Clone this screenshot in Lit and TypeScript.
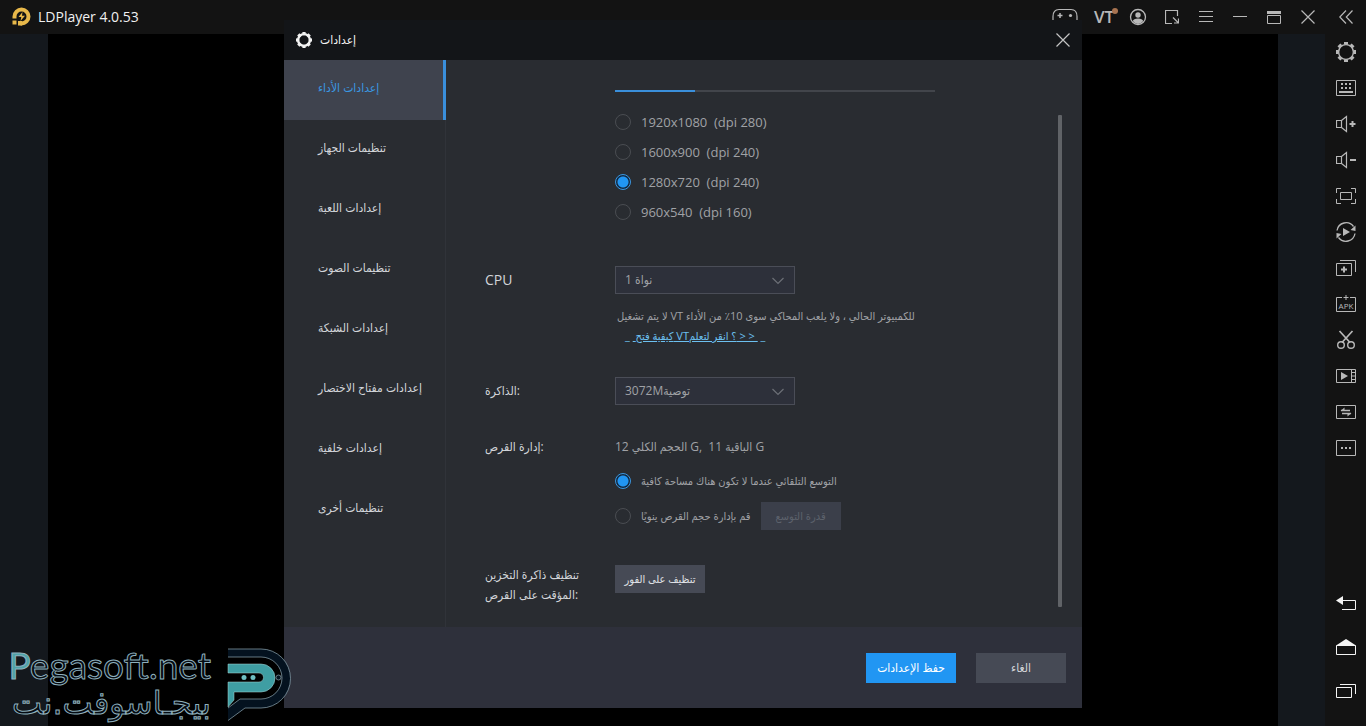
import { LitElement, html, css, svg } from "lit";
import { customElement, state } from "lit/decorators.js";
import { classMap } from "lit/directives/class-map.js";

const icon = (w: number, h: number, body: unknown) =>
  html`<svg width=${w} height=${h} viewBox="0 0 ${w} ${h}" aria-hidden="true">${body}</svg>`;

const gear = (ring: number, tooth: number) => svg`
  <circle cx="10" cy="10" r="7.4" fill="none" stroke="currentColor" stroke-width=${ring}/>
  ${[0, 45, 90, 135, 180, 225, 270, 315].map(
    (a) => svg`<rect x="8" y="0" width="4" height=${tooth} fill="currentColor" transform="rotate(${a} 10 10)"/>`
  )}`;

const speaker = svg`<path d="M.5 6.500h5v7h-5zM5.500 6.500l5-4v15l-5-4" fill="none" stroke="currentColor" stroke-width="1.2"/>`;

const titleIcons = [
  { name: "Gamepad", wide: true, g: icon(26, 20, svg`<path d="M1 19V9.500Q1 2.500 7 2.500h12q6 0 6 7V19" fill="none" stroke="currentColor" stroke-width="1.2"/><path d="M8 6v5M5.500 8.500h5" stroke="currentColor" stroke-width="1.5"/><circle cx="18.500" cy="8.500" r="1.600" fill="currentColor"/>`) },
  { name: "VT", wide: false, g: icon(28, 26, svg`<text x="4" y="19" font-size="17" font-weight="600" fill="currentColor">VT</text><circle cx="25" cy="7" r="3" fill="#a87350"/>`) },
  { name: "Account", wide: false, g: icon(18, 20, svg`<circle cx="9" cy="10" r="7.5" fill="none" stroke="currentColor" stroke-width="1.3"/><circle cx="9" cy="8" r="2.7" fill="currentColor"/><path d="M3.800 14Q4.500 11.500 9 11.500t5.200 2.500Q12 17 9 17t-5.200-3z" fill="currentColor"/>`) },
  { name: "Resize", wide: false, g: icon(14, 20, svg`<path d="M7 16.500H.5v-13h12V9M8 10.500l5 5M13.500 11.500v4.500H9" fill="none" stroke="currentColor" stroke-width="1.2"/>`) },
  { name: "Menu", wide: false, g: icon(14, 20, svg`<path d="M0 4.500h14M0 9.500h14M0 14.500h14" stroke="currentColor"/>`) },
  { name: "Minimize", wide: false, g: icon(14, 20, svg`<path d="M0 9.500h14" stroke="currentColor"/>`) },
  { name: "Maximize", wide: false, g: icon(14, 20, svg`<path d="M0 5.500h14" stroke="currentColor" stroke-width="3"/><path d="M.5 8.500h13v8H.5z" fill="none" stroke="currentColor"/>`) },
  { name: "Close", wide: false, g: icon(14, 20, svg`<path d="M.5 3.500l13 13M13.500 3.500l-13 13" stroke="currentColor" stroke-width="1.2"/>`) },
];

const collapse = icon(14, 20, svg`<path d="M7 3.500L.8 10 7 16.500M13.500 3.500L7.300 10l6.200 6.500" fill="none" stroke="currentColor" stroke-width="1.2"/>`);

const toolIcons = [
  { name: "Settings", g: icon(20, 20, gear(1.4, 2.6)) },
  { name: "Keyboard", g: icon(20, 20, svg`<path d="M.5 2.500h19v15H.5z" fill="none" stroke="currentColor"/><path d="M5 5h2v2H5zM9 5h2v2H9zM13 5h2v2h-2zM5 9h2v2H5zM9 9h2v2H9zM13 9h2v2h-2zM3 13h14v2H3z" fill="currentColor"/>`) },
  { name: "Volume up", g: icon(20, 20, svg`${speaker}<path d="M13.500 10h6M16.500 7v6" stroke="currentColor" stroke-width="2"/>`) },
  { name: "Volume down", g: icon(20, 20, svg`${speaker}<path d="M14 10h6" stroke="currentColor" stroke-width="2"/>`) },
  { name: "Full screen", g: icon(20, 20, svg`<path d="M.5 7V2.500H5M15 2.500h4.500V7M.5 13v4.500H5M15 17.500h4.500V13M4.500 6.500h11v7h-11z" fill="none" stroke="currentColor"/>`) },
  { name: "Sync", g: icon(20, 20, svg`<path d="M1 8.500A9.200 9.200 0 0 1 17.500 4.500M19 11.500A9.200 9.200 0 0 1 2.500 15.500" fill="none" stroke="currentColor" stroke-width="1.3"/><path d="M7 6l7 4-7 4zM19.500 3.500v5.500L14.500 8zM.5 16.500V11l5 1z" fill="currentColor"/>`) },
  { name: "Multi instance", g: icon(20, 20, svg`<path d="M.5 5.500h15v12H.5zM4 2.500h15.500V14" fill="none" stroke="currentColor"/><path d="M5 11.500h6M8 8.500v6" stroke="currentColor" stroke-width="2"/>`) },
  { name: "Install APK", g: icon(20, 20, svg`<path d="M6 3.500H.5v14h19v-14H14M10 1v5M7.500 3.500h5" fill="none" stroke="currentColor"/><text x="10" y="15" text-anchor="middle" font-size="8" fill="currentColor">APK</text>`) },
  { name: "Screenshot", g: icon(20, 20, svg`<path d="M3.500 1l10.500 11.500M16.500 1L6 12.500" stroke="currentColor" stroke-width="1.7"/><circle cx="5" cy="15" r="3.3" fill="none" stroke="currentColor" stroke-width="1.4"/><circle cx="15" cy="15" r="3.3" fill="none" stroke="currentColor" stroke-width="1.4"/>`) },
  { name: "Record", g: icon(20, 20, svg`<path d="M.5 3.500h19v13H.5zM15.500 3.500v13M15.500 6.500h4M15.500 10h4M15.500 13.500h4" fill="none" stroke="currentColor"/><path d="M5 6l7 4-7 4z" fill="currentColor"/>`) },
  { name: "Shared folder", g: icon(20, 20, svg`<path d="M.5 3.500h19v13H.5z" fill="none" stroke="currentColor"/><path d="M5 8.500h9M6 11.500h9" stroke="currentColor" stroke-width="1.5"/><path d="M8.500 5.500V9H4.500zM11.500 14.500V11h4z" fill="currentColor"/>`) },
  { name: "More", g: icon(20, 20, svg`<path d="M.5 2.500h19v15H.5z" fill="none" stroke="currentColor"/><path d="M5 9h2v2H5zM9 9h2v2H9zM13 9h2v2h-2z" fill="currentColor"/>`) },
];

const navIcons = [
  { name: "Back", g: icon(20, 20, svg`<path d="M6 7.500h13.500v9H6" fill="none" stroke="currentColor"/><path d="M0 7.500L7 3v9z" fill="currentColor"/>`) },
  { name: "Home", g: icon(20, 20, svg`<path d="M.5 8.500h19v9H.5z" fill="none" stroke="currentColor"/><path d="M0 8.500L10 2l10 6.500z" fill="currentColor"/>`) },
  { name: "Recent", g: icon(20, 20, svg`<path d="M.5 6.500h15v10H.5zM4 3.500h15.500V13" fill="none" stroke="currentColor"/>`) },
];

const tabs = [
  "إعدادات الأداء",
  "تنظيمات الجهاز",
  "إعدادات اللعبة",
  "تنظيمات الصوت",
  "إعدادات الشبكة",
  "إعدادات مفتاح الاختصار",
  "إعدادات خلفية",
  "تنظيمات أخرى",
];

const resolutions = [
  ["1920x1080", "(dpi 280)"],
  ["1600x900", "(dpi 240)"],
  ["1280x720", "(dpi 240)"],
  ["960x540", "(dpi 160)"],
];

@customElement("settings-dialog")
export class SettingsDialog extends LitElement {
  @state() private tab = 0;
  @state() private resolution = 2;
  @state() private disk = 0;

  static styles = css`
    :host {
      display: flex;
      flex-direction: column;
      width: min(798px, 100%);
      background: #292c31;
      color: #d2d5d9;
      font-family: "Open Sans", "DejaVu Sans Condensed", sans-serif;
      font-size: 12px;
      line-height: 20px;
    }
    * { box-sizing: border-box; }
    button, select { font: inherit; color: inherit; border: 0; padding: 0; border-radius: 0; }
    header {
      display: flex;
      align-items: center;
      gap: 8px;
      height: 40px;
      padding: 0 12px;
      background: #131518;
      color: #f2f2f2;
    }
    h1 { flex: 1; margin: 0; font-size: 12px; font-weight: 400; }
    .close { display: flex; background: none; color: #c4c4c4; }
    .body { display: flex; }
    nav { display: flex; flex-direction: column; width: 162px; border-right: 1px solid #303339; }
    .tab { height: 60px; padding: 0 0 4px 34px; background: none; text-align: left; white-space: nowrap; }
    .tab.on { background: #3f434e; color: #3a96e0; box-shadow: inset -3px 0 #3a8fdb; margin-right: -1px; }
    .pane {
      flex: 1;
      display: grid;
      grid-template-columns: 130px 1fr;
      align-content: start;
      padding: 30px 20px 22px 39px;
      min-width: 0;
    }
    progress { display: block; appearance: none; width: 320px; height: 2px; border: 0; margin-bottom: 15px; background: #42454b; }
    progress::-webkit-progress-bar { background: #42454b; }
    progress::-webkit-progress-value { background: #3a8fdb; }
    .label { padding-right: 20px; }
    .tall { line-height: 28px; }
    .latin { font-size: 14px; }
    .field { color: #a0a2a6; }
    .row { display: flex; align-items: center; gap: 10px; height: 30px; }
    .row label { white-space: pre; }
    .num { font-size: 13px; }
    .disk { display: grid; gap: 5px; padding-top: 9px; font-size: 11px; }
    input {
      appearance: none;
      flex: none;
      width: 16px;
      height: 16px;
      margin: 0;
      border: 1px solid #4a4d52;
      border-radius: 50%;
    }
    input:checked { border-color: #3a96e0; background: radial-gradient(circle, #2196f3 5px, #12283f 6px); }
    .pick { position: relative; display: block; width: 180px; height: 28px; }
    .pick select { appearance: none; width: 100%; height: 100%; padding: 0 9px; background: #2d303a; border: 1px solid #4a4d57; color: #a0a2a6; }
    .pick svg { position: absolute; right: 11px; top: 11px; color: #6c6f76; pointer-events: none; }
    .hint { margin: 12px 0 0 2px; font-size: 11px; white-space: nowrap; }
    a { display: block; width: max-content; margin-left: 10px; color: #6cc0f0; font-size: 11px; text-decoration: none; white-space: pre; }
    .under { text-decoration: underline; }
    .btn { width: 90px; height: 28px; background: #464a55; color: #e0e2e6; font-size: 11px; }
    .btn:disabled { width: 80px; background: #3b3f4a; color: #5d626c; }
    footer { display: flex; justify-content: flex-end; gap: 20px; padding: 26px 16px 25px; background: #2e303b; }
    footer button { width: 90px; height: 30px; background: #464a55; color: #d2d4d8; }
    footer .save { background: #2196f3; color: #fff; }
    .bar { width: 4px; margin: 55px 20px 20px 0; background: #606367; border-radius: 1px; }
    .g1 { margin-bottom: 39px; }
    .g2 { margin-bottom: 31px; }
    .g3 { margin-bottom: 32px; }
    .g4 { margin-bottom: 34px; }
  `;

  private radio(group: string, i: number, current: number, pick: (i: number) => void, text: unknown) {
    const id = group + i;
    return html`<input type="radio" id=${id} name=${group} .checked=${i === current} @change=${() => pick(i)} /><label for=${id}>${text}</label>`;
  }

  private caret = icon(12, 8, svg`<path d="M.5 1L6 6.500 11.500 1" fill="none" stroke="currentColor" stroke-width="1.2"/>`);

  render() {
    const pickDisk = (i: number) => (this.disk = i);
    return html`
      <header>
        <svg width="16" height="16" viewBox="0 0 20 20" aria-hidden="true">${gear(3, 4)}</svg>
        <h1>إعدادات</h1>
        <button class="close" aria-label="Close">${icon(14, 14, svg`<path d="M.5.5l13 13M13.500.5L.5 13.500" stroke="currentColor" stroke-width="1.2"/>`)}</button>
      </header>
      <div class="body">
        <nav>
          ${tabs.map((t, i) => html`<button class=${classMap({ tab: true, on: i === this.tab })} @click=${() => (this.tab = i)}>${t}</button>`)}
        </nav>
        <div class="pane">
          <span></span>
          <div class="field g1">
            <progress max="4" value="1" aria-label="Level"></progress>
            ${resolutions.map(([size, dpi], i) => html`<div class="row num">${this.radio("res", i, this.resolution, (n) => (this.resolution = n), `${size}  ${dpi}`)}</div>`)}
          </div>
          <label class="label tall latin" for="cpu">CPU</label>
          <div class="field g2">
            <span class="pick"><select id="cpu"><option>1 نواة</option></select>${this.caret}</span>
            <p class="hint">لا يتم تشغيل VT للكمبيوتر الحالي ، ولا يلعب المحاكي سوى 10٪ من الأداء</p>
            <a href="#vt">_ <span class="under"> كيفية فتح VT؟ انقر لتعلم &gt; &gt; </span> _</a>
          </div>
          <label class="label tall" for="ram">الذاكرة:</label>
          <div class="field g3">
            <span class="pick"><select id="ram"><option>3072Mتوصية</option></select>${this.caret}</span>
          </div>
          <span class="label">إدارة القرص:</span>
          <div class="field g4">
            <div>12 الحجم الكلي G,&nbsp; 11 الباقية G</div>
            <div class="disk">
              <div class="row">${this.radio("disk", 0, this.disk, pickDisk, "التوسع التلقائي عندما لا تكون هناك مساحة كافية")}</div>
              <div class="row">${this.radio("disk", 1, this.disk, pickDisk, "قم بإدارة حجم القرص ينويًا")}<button class="btn" disabled>قدرة التوسع</button></div>
            </div>
          </div>
          <span class="label">تنظيف ذاكرة التخزين المؤقت على القرص:</span>
          <div><button class="btn">تنظيف على الفور</button></div>
        </div>
        <div class="bar"></div>
      </div>
      <footer><button class="save">حفظ الإعدادات</button><button>الغاء</button></footer>
    `;
  }
}

@customElement("app-root")
export class AppRoot extends LitElement {
  static styles = css`
    :host {
      display: grid;
      grid-template: 34px 1fr / 1fr 41px;
      position: relative;
      height: 100vh;
      background: #131313;
      color: #b8b8b8;
      font-family: "Open Sans", "DejaVu Sans Condensed", sans-serif;
      overflow: hidden;
    }
    * { box-sizing: border-box; }
    button { display: flex; justify-content: center; align-items: center; border: 0; padding: 0; background: none; color: inherit; font-family: inherit; }
    .top { display: flex; align-items: center; padding-left: 12px; }
    .name { flex: 1; margin-left: 6px; font-size: 14px; line-height: 18px; color: #f0f0f0; }
    .win { width: 34px; height: 34px; }
    .wide { width: 44px; }
    .stage { padding: 0 47px 0 48px; background: #14181d; }
    .screen { height: 100%; background: #000; }
    .tools { display: flex; flex-direction: column; padding-bottom: 13px; }
    .tool { height: 36px; }
    .nav { height: 44px; color: #f4f4f4; }
    .gap { flex: 1; }
    .over { position: absolute; inset: 0; display: flex; justify-content: center; align-items: center; padding-top: 2px; }
    .mark { position: absolute; left: 9px; bottom: 4px; display: flex; align-items: center; gap: 16px; pointer-events: none; }
    .words { display: flex; flex-direction: column; align-items: flex-end; width: 202px; color: #050b12; -webkit-text-stroke: 1px #8fb0bd; white-space: nowrap; }
    .latin { font: 37px/38px Lato, sans-serif; }
    .latin b { font-weight: 400; color: #4fa3a8; }
    .arabic { font: 32px/38px "DejaVu Sans", sans-serif; }
  `;

  render() {
    return html`
      <div class="top">
        <svg width="20" height="20" viewBox="0 0 20 20" aria-hidden="true">
          <path d="M2.500 11.500V9.500a7 7 0 1 1 7 7h-1" fill="none" stroke="#e8b84a" stroke-width="4"/>
          <path d="M10.500 5L6.500 10h2.800l-.8 4L13 8.800h-3z" fill="#e8b84a"/>
          <path d="M.5 13.500h4v4h-4zM6 14h4v4.500H6z" fill="#e8b84a"/>
        </svg>
        <span class="name">LDPlayer 4.0.53</span>
        ${titleIcons.map((t) => html`<button class=${classMap({ win: true, wide: t.wide })} aria-label=${t.name}>${t.g}</button>`)}
      </div>
      <button aria-label="Collapse">${collapse}</button>
      <div class="stage"><div class="screen"></div></div>
      <div class="tools">
        ${toolIcons.map((t) => html`<button class="tool" aria-label=${t.name}>${t.g}</button>`)}
        <span class="gap"></span>
        ${navIcons.map((t) => html`<button class="nav" aria-label=${t.name}>${t.g}</button>`)}
      </div>
      <div class="over"><settings-dialog></settings-dialog></div>
      <div class="mark">
        <div class="words">
          <span class="latin"><b>P</b>egasoft.net</span>
          <span class="arabic">بيجـاسوفت.نت</span>
        </div>
        <svg width="64" height="74" viewBox="0 0 64 74" aria-hidden="true">
          <path d="M1 2H34a29.500 29.500 0 0 1 0 59H18L1 73.500V61l12-9H34a21 21 0 0 0 0-42H1z" fill="#04121f"/>
          <path d="M1 2H34a29.500 29.500 0 0 1 0 59H18L1 73.500M1 10H34a21 21 0 0 1 0 42H13L1 61" fill="none" stroke="#8fa9b5" stroke-width=".7"/>
          <path d="M1 17H34a14 14 0 0 1 0 28H7v8l-6 7V35H32a4.500 4.500 0 0 0 0-9H1z" fill="#3f9ea3" stroke="#a9d4d6" stroke-width=".5"/>
          <circle cx="17" cy="30.500" r="2.500" fill="#6fbfc2"/><circle cx="26" cy="30.500" r="2.500" fill="#6fbfc2"/>
          <circle cx="51.500" cy="30.500" r="2.500" fill="#04121f" stroke="#8fa9b5" stroke-width=".7"/>
        </svg>
      </div>
    `;
  }
}
